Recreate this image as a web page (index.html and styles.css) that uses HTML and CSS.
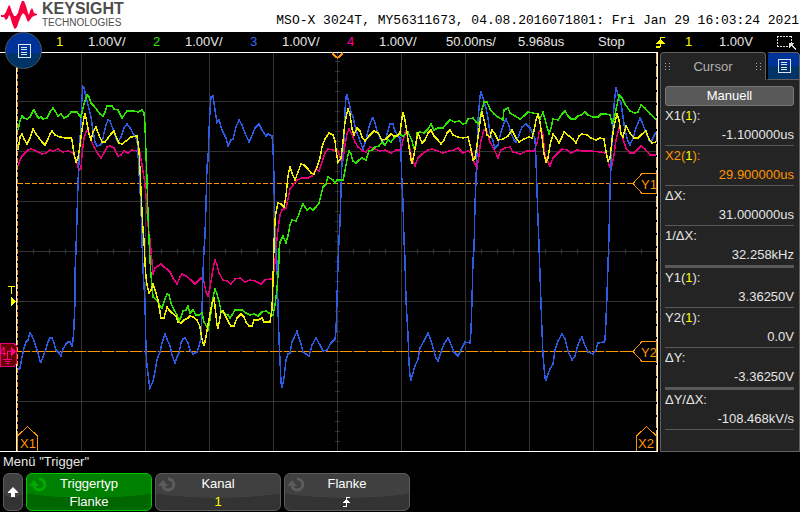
FILE: index.html
```html
<!DOCTYPE html>
<html lang="de">
<head>
<meta charset="utf-8">
<title>MSO-X 3024T</title>
<link rel="stylesheet" href="styles.css">
</head>
<body>
<header class="brandbar">
  <div class="brand">
    <svg class="brand-mark" viewBox="0 0 38 30" width="38" height="30" aria-hidden="true">
      <path fill="#f5003d" d="M1 15 4 15 6 12 8 7 9 5 10 6 12 12 14 16 16 16 18 13 20 6 22 1 24 1 26 6 28 13 29 15 30 11 32 8 33 10 34 13 37 14 37 15 34 16 32 17 30 20 28 22 27 20 25 15 23 13 21 16 19 21 17 27 15 29 14 28 12 23 10 16 9 15 8 18 6 20 5 19 4 17 1 17Z"/>
    </svg>
    <div>
      <div class="brand-name">KEYSIGHT</div>
      <div class="brand-sub">TECHNOLOGIES</div>
    </div>
  </div>
  <div class="device">MSO-X 3024T, MY56311673, 04.08.2016071801: Fri Jan 29 16:03:24 2021</div>
</header>

<div class="status">
  <button class="main-menu" aria-label="Hauptmenü">
    <svg viewBox="0 0 14 14" width="14" height="14" shape-rendering="crispEdges"><path fill="none" stroke="#dfe6f2" d="M1 .5H13V13.5H1ZM4 3.5H10M4 5.5H10M4 8.5H10M4 10.5H10"/></svg>
  </button>
  <span></span>
  <span class="ch1">1</span><span>1.00V/</span>
  <span class="ch2">2</span><span>1.00V/</span>
  <span class="ch3">3</span><span>1.00V/</span>
  <span class="ch4">4</span><span>1.00V/</span>
  <span>50.00ns/</span>
  <span>5.968us</span>
  <span>Stop</span>
  <svg viewBox="0 0 10 12" width="10" height="12" shape-rendering="crispEdges"><path fill="none" stroke="#ff0" d="M1 10.5H5.5V1.500H10M1 11.500H5"/><path fill="#ff0" d="M1 8 5.500 3 10 8Z"/></svg>
  <span class="ch1">1</span>
  <span>1.00V</span>
  <svg viewBox="0 0 20 16" width="20" height="16" shape-rendering="crispEdges"><path fill="none" stroke="#ddd" stroke-dasharray="2 1" d="M0 2.500H14M0 12.500H12M.5 2V13M14.500 2V9"/><path fill="#ddd" d="M12 9H17V10L15 11 19 15 18 16 14 12 12 14Z"/></svg>
</div>

<main class="workspace">
  <svg class="plot" viewBox="0 52 660 400" role="img" aria-label="Messkurven">
    <g class="grid">
      <path d="M81.500 53V451M145.500 53V451M209.500 53V451M273.500 53V451M337.500 53V451M401.500 53V451M465.500 53V451M529.500 53V451M593.500 53V451"/>
      <path d="M17 101.500H657M17 151.500H657M17 201.500H657M17 251.500H657M17 301.500H657M17 351.500H657M17 401.500H657"/>
      <path class="ticks-x" d="M33 251.500H657"/>
      <path class="ticks-y" d="M337.500 61V450"/>
    </g>

    <g class="cursor">
      <path stroke-dasharray="5 2" d="M18 183.500H633"/>
      <path stroke-dasharray="12 2" d="M18 351.500H633"/>
    </g>

    <g class="trace">
      <polyline class="t4" points="18,166 20,160 22,156 25,153 28,150 31,149 34,150 38,152 42,154 46,153 50,150 53,151 58,149 63,152 68,151 73,153 76,160 79,170 81,168 82,155 84,138 86,132 88,130 91,140 94,147 98,154 101,158 104,153 107,147 110,146 114,148 118,156 121,155 124,151 128,153 132,150 137,151 140,153 142,165 144,177 146,195 148,225 150,240 152,262 153,275 155,268 158,266 161,264 164,267 167,269 170,272 173,278 177,284 180,277 182,274 186,276 191,280 195,284 198,281 201,278 204,282 206,292 208,296 210,288 212,275 214,264 215,260 217,265 219,273 223,280 227,281 231,284 235,279 240,278 245,282 250,280 255,281 261,284 265,280 270,279 273,279 275,262 276,248 278,230 280,215 282,210 286,208 288,199 290,189 293,185 297,180 302,178 308,178 312,176 316,169 319,171 322,162 325,153 328,149 333,150 338,151 341,160 343,160 345,145 347,134 349,129 352,134 355,142 358,147 363,151 366,152 370,147 375,149 380,151 385,150 391,153 396,150 401,150 403,140 406,130 409,145 412,158 415,166 418,158 422,154 428,150 432,149 438,151 443,153 449,151 454,150 458,148 463,153 468,151 472,153 474,162 477,168 479,155 481,140 484,130 487,132 490,142 494,149 498,158 501,150 505,148 510,147 513,152 520,154 527,151 534,151 537,143 539,133 541,128 543,135 545,155 548,162 550,166 553,158 557,154 562,149 567,150 571,153 577,150 583,151 590,151 600,152 606,153 609,165 611,170 614,155 616,140 619,128 622,136 626,148 630,153 634,153 638,149 641,146 645,149 650,155 656,155"/>
      <polyline class="t3" points="18,370 20,368 22,357 24,348 26,342 28,340 30,333 32,336 34,341 36,347 38,353 40,361 41,362 43,357 46,349 48,342 50,338 52,338 54,343 56,350 59,353 61,356 63,349 66,344 68,342 70,342 72,346 73,341 74,326 75,301 75,273 76,250 77,217 78,183 79,160 81,120 82,97 83,87 84,88 86,97 88,105 91,117 93,131 95,142 97,146 100,145 102,143 104,133 106,125 108,120 110,121 113,129 116,138 118,142 121,137 124,128 127,124 130,128 134,135 137,140 138,153 140,190 141,207 142,240 143,270 145,302 146,351 147,366 149,382 150,388 153,381 155,372 157,360 160,352 162,343 164,337 165,334 167,339 170,346 172,355 175,363 177,357 179,353 181,343 183,339 185,338 188,343 190,350 193,354 197,352 199,346 201,338 202,310 203,273 204,250 205,235 206,205 207,165 208,161 209,132 210,110 211,97 213,96 215,110 217,122 219,120 222,130 226,138 228,146 231,140 233,139 236,127 239,120 242,125 245,133 249,142 251,138 255,128 259,124 262,130 266,136 268,134 272,136 273,147 274,178 275,240 277,262 278,310 279,339 280,361 281,382 282,388 284,378 286,360 288,354 290,353 292,342 294,338 297,331 299,338 301,344 303,352 306,354 309,356 312,345 316,338 320,345 323,351 327,350 331,343 335,339 336,331 337,300 338,262 339,240 340,223 341,190 342,160 344,140 345,110 346,97 347,95 349,103 351,112 353,117 356,130 360,141 363,149 366,140 369,127 372,119 373,118 375,123 377,131 380,138 383,142 386,138 388,131 390,124 393,124 395,131 398,136 400,138 401,154 402,185 403,202 404,240 405,260 406,300 408,335 409,363 410,376 411,380 413,373 415,366 418,359 420,348 424,341 428,333 430,338 432,344 434,351 436,358 438,361 441,352 444,344 448,338 450,342 454,352 458,356 461,350 465,342 470,343 471,331 472,300 473,260 474,250 475,205 476,180 477,150 478,120 480,96 481,92 483,98 486,108 488,118 490,133 493,141 495,148 498,145 499,140 501,132 504,123 506,119 509,126 511,133 514,140 516,142 519,135 522,127 526,124 530,128 533,134 535,139 536,160 537,190 538,220 539,245 540,275 541,303 542,331 543,355 545,378 546,380 548,374 550,369 553,364 555,350 558,341 562,334 565,339 568,351 572,360 575,356 577,348 580,340 582,337 584,343 588,352 593,354 596,350 598,343 604,342 605,340 606,320 607,295 608,265 609,235 610,190 611,165 612,140 614,105 616,87 618,95 621,103 623,117 625,131 628,141 630,145 633,138 636,128 640,118 642,122 645,130 649,140 651,142 654,136 656,132"/>
      <polyline class="t2" points="18,130 20,121 22,116 24,118 27,119 30,117 33,111 34,110 37,116 39,118 41,117 43,119 47,118 50,112 53,108 55,111 58,116 61,114 64,118 68,116 71,112 75,112 77,112 79,115 81,117 83,108 85,101 87,95 89,97 91,103 94,106 97,110 100,114 103,116 105,112 107,106 112,106 114,109 118,110 122,118 127,111 134,111 138,112 142,110 144,113 145,125 146,155 147,180 148,215 149,240 150,260 151,275 153,297 157,300 160,306 162,308 165,299 167,294 169,295 171,303 174,310 177,315 179,321 181,317 183,311 186,310 188,306 190,313 193,310 196,315 199,315 202,313 204,322 207,327 208,330 210,320 212,305 214,293 215,289 217,294 219,301 221,311 225,314 228,315 230,318 232,315 235,310 242,310 246,313 250,315 254,314 258,316 262,312 266,311 269,313 273,315 275,305 277,289 278,275 279,260 279,250 280,242 282,238 283,236 286,243 288,236 290,225 292,220 296,221 299,214 302,206 303,204 307,210 310,208 313,210 316,207 319,203 321,195 323,187 326,184 328,177 333,180 335,183 337,180 343,180 344,176 346,165 348,155 349,151 351,154 353,161 356,163 359,160 362,158 366,160 369,151 372,150 375,147 379,146 382,142 385,145 388,140 391,142 394,138 399,134 403,136 408,132 412,141 414,148 416,145 417,133 420,132 424,133 428,129 431,124 434,130 438,128 443,128 446,124 450,120 455,122 459,121 463,124 466,123 468,119 473,118 476,122 479,124 481,113 484,102 487,102 490,109 494,114 498,117 503,120 504,110 508,108 510,113 515,116 520,119 524,116 528,112 533,113 538,114 540,119 543,112 546,123 549,134 551,128 553,119 558,120 562,114 565,111 568,116 571,119 575,119 578,116 581,115 585,112 588,115 593,117 598,117 601,114 606,114 610,115 612,123 614,119 617,105 619,95 622,98 625,104 630,111 635,113 638,112 641,105 645,108 650,114 656,119"/>
      <polyline class="t1" points="18,150 20,137 22,134 24,139 27,144 30,138 32,132 33,129 36,134 39,138 42,142 45,145 48,139 50,134 52,131 55,135 60,137 66,138 71,138 72,140 74,154 76,162 78,158 80,145 82,130 84,117 85,113 87,123 89,134 91,140 93,132 96,127 99,135 102,142 105,142 108,138 111,134 114,131 117,139 119,143 122,144 126,141 131,137 137,136 139,150 141,190 142,212 143,230 144,240 145,263 146,277 147,285 149,293 151,290 153,284 155,290 158,300 160,312 161,318 164,318 167,307 169,310 172,313 176,316 178,322 181,323 184,320 188,318 190,316 193,317 197,320 200,327 202,339 204,346 206,337 208,325 210,314 212,303 214,299 215,306 217,325 218,328 220,318 221,312 223,311 226,317 229,323 231,326 234,326 237,318 241,314 244,317 246,322 249,326 252,326 254,320 258,320 262,318 264,322 270,322 271,315 272,310 273,280 274,245 275,220 276,212 278,203 281,204 284,207 286,196 288,176 290,166 292,173 295,180 298,172 301,164 304,165 308,169 311,173 314,174 317,167 320,158 322,147 325,139 329,133 333,135 335,141 336,150 338,162 341,158 343,142 345,122 348,109 350,114 352,129 354,135 357,128 360,131 362,137 365,141 369,136 374,131 378,133 382,140 386,139 391,134 394,136 397,136 400,133 402,118 403,112 405,120 407,132 409,147 411,160 412,163 414,155 416,142 418,133 422,143 425,140 428,133 431,130 434,136 438,140 441,144 444,140 447,133 450,130 453,135 458,137 463,138 468,137 471,149 473,160 475,158 477,145 479,130 481,115 482,112 485,124 487,135 490,137 492,130 495,134 498,140 503,139 508,136 512,130 516,138 519,142 524,139 529,137 532,138 534,131 536,120 538,114 540,122 542,137 544,154 546,162 548,158 550,145 553,134 556,138 559,143 562,137 564,132 569,136 573,139 576,143 579,136 582,134 587,135 591,138 596,140 600,138 604,139 606,152 608,161 610,158 612,140 614,126 617,114 619,120 621,134 623,137 626,126 630,133 634,138 638,138 642,134 646,131 649,139 652,143 656,142"/>
    </g>

    <path class="frame" d="M0 52.500H658M0 451.500H658M16.500 52V452M657.500 52V452"/>
    <g class="cursor">
      <path stroke-dasharray="5 2" d="M17.500 53V451"/>
      <path class="x2-line" stroke-dasharray="11 2" d="M656.500 53V451"/>
      <path class="flag" d="M656 173.500H642L633 183.500 642 193.500H656Z"/>
      <path class="flag" d="M656 341.500H642L633 351.500 642 361.500H656Z"/>
      <path class="flag" d="M17.500 451V436L27.500 426.500 37.500 436V451"/>
      <path class="flag" d="M636.500 451V436L646.500 426.500 656.500 436V451"/>
      <path class="trig" d="M332 53 337.500 58 343 53"/>
    </g>
    <g class="flag-text">
      <text x="641" y="189">Y1</text>
      <text x="641" y="357">Y2</text>
      <text x="20" y="448">X1</text>
      <text x="638" y="448">X2</text>
    </g>

    <path class="t-letter" d="M8 286.500H15M11.500 286V294"/>
    <path class="t-arrow" d="M11 297 16 301.500 11 306Z"/>
    <path class="gnd-box" d="M0 343.500H14L16 345.500V364L14 366.500H0Z"/>
    <text class="gnd-text" x="-1" y="356">4</text>
    <path class="gnd-arrow" d="M11 346 16 351.500 11 356Z"/>
    <path class="gnd-lines" d="M11 351.500H7.500V359M3 359.500H12M5 361.500H10M6 363.500H9"/>
  </svg>

  <aside class="panel">
    <div class="tabs">
      <div class="tab">
        <svg viewBox="0 0 5 8" width="5" height="8" shape-rendering="crispEdges"><path stroke="#aaa" stroke-dasharray="1 2" d="M.5 0V8M4.500 0V8"/></svg>
        <span>Cursor</span>
        <svg viewBox="0 0 5 8" width="5" height="8" shape-rendering="crispEdges"><path stroke="#aaa" stroke-dasharray="1 2" d="M.5 0V8M4.500 0V8"/></svg>
      </div>
      <button class="tab-menu" aria-label="Menü">
        <svg viewBox="0 0 14 14" width="14" height="14" shape-rendering="crispEdges"><path fill="none" stroke="#dfe6f2" d="M1 .5H13V13.500H1ZM4 3.500H10M4 5.500H10M4 8.500H10M4 10.500H10"/></svg>
      </button>
    </div>
    <div class="panel-body">
      <button class="mode">Manuell</button>
      <dl class="readings">
        <div><dt>X1(<b>1</b>):</dt><dd>-1.100000us</dd></div>
        <div class="active"><dt>X2(<b>1</b>):</dt><dd>29.900000us</dd></div>
        <div><dt>ΔX:</dt><dd>31.000000us</dd></div>
        <div class="group-end"><dt>1/ΔX:</dt><dd>32.258kHz</dd></div>
        <div><dt>Y1(<b>1</b>):</dt><dd>3.36250V</dd></div>
        <div><dt>Y2(<b>1</b>):</dt><dd>0.0V</dd></div>
        <div class="group-end"><dt>ΔY:</dt><dd>-3.36250V</dd></div>
        <div><dt>ΔY/ΔX:</dt><dd>-108.468kV/s</dd></div>
      </dl>
    </div>
  </aside>
</main>

<footer class="menu">
  <div class="menu-title">Menü "Trigger"</div>
  <div class="keys">
    <button class="key back" aria-label="Zurück">
      <svg viewBox="0 0 10 10" width="10" height="10"><path fill="#fff" d="M5 0 10 5V6H7V10H3V6H0V5Z"/></svg>
    </button>
    <button class="key selected">
      <svg class="knob" viewBox="0 0 18 16" width="18" height="16"><path fill="none" stroke="currentColor" stroke-width="3" d="M5 10A5.500 5.500 0 1 0 10 3"/><path fill="currentColor" d="M0 10 5 4 10 10Z"/></svg>
      <span>Triggertyp</span><span>Flanke</span>
    </button>
    <button class="key">
      <svg class="knob" viewBox="0 0 18 16" width="18" height="16"><path fill="none" stroke="currentColor" stroke-width="3" d="M5 10A5.500 5.500 0 1 0 10 3"/><path fill="currentColor" d="M0 10 5 4 10 10Z"/></svg>
      <span>Kanal</span><span class="ch1">1</span>
    </button>
    <button class="key">
      <svg class="knob" viewBox="0 0 18 16" width="18" height="16"><path fill="none" stroke="currentColor" stroke-width="3" d="M5 10A5.500 5.500 0 1 0 10 3"/><path fill="currentColor" d="M0 10 5 4 10 10Z"/></svg>
      <span>Flanke</span>
      <span class="edge"><svg viewBox="0 0 8 12" width="8" height="12" shape-rendering="crispEdges"><path fill="none" stroke="#fff" d="M0 10.500H3.500V1.500H7"/><path fill="#fff" d="M0 7 3.500 3 7 7Z"/></svg></span>
    </button>
  </div>
</footer>
</body>
</html>
```
FILE: styles.css
```css
* {
  box-sizing: border-box;
}

body {
  margin: 0;
  background: #000;
  color: #e6e6e6;
  font: 13px/20px "Liberation Sans", Arial, sans-serif;
}

button {
  margin: 0;
  padding: 0;
  font: inherit;
  color: inherit;
}

svg {
  display: block;
}

.ch1 { color: #ff0; }
.ch2 { color: #2ee600; }
.ch3 { color: #3b66f0; }
.ch4 { color: #ff0090; }

/* Brand bar */
.brandbar {
  display: flex;
  justify-content: space-between;
  height: 32px;
  padding-right: 1px;
  background: #fff;
}

.brand {
  display: flex;
  gap: 4px;
}

.brand-name {
  padding-top: 1px;
  color: #4d4d4d;
  font-size: 16px;
  line-height: 16px;
  font-weight: bold;
}

.brand-sub {
  color: #4d4d4d;
  font-size: 10px;
  line-height: 11px;
}

.device {
  padding-top: 11px;
  color: #000;
  font-family: "Liberation Mono", monospace;
  white-space: nowrap;
}

/* Status line */
.status {
  position: relative;
  display: grid;
  grid-template-columns:
    minmax(0, 56fr)
    minmax(0, 32fr) minmax(0, 65fr)
    minmax(0, 32fr) minmax(0, 65fr)
    minmax(0, 32fr) minmax(0, 65fr)
    minmax(0, 32fr) minmax(0, 67fr)
    minmax(0, 72fr) minmax(0, 80fr) minmax(0, 57fr)
    minmax(0, 30fr) minmax(0, 34fr) minmax(0, 58fr) minmax(0, 23fr);
  align-items: center;
  height: 20px;
  white-space: nowrap;
}

.main-menu {
  position: absolute;
  top: 0;
  left: 5px;
  display: grid;
  place-items: center;
  width: 37px;
  height: 37px;
  border: 1px solid #4a5560;
  border-radius: 50%;
  background: linear-gradient(#039 58%, #036 58%);
}

/* Plot */
.workspace {
  display: grid;
  grid-template-columns: minmax(0, 1fr) 140px;
  align-items: start;
}

.plot {
  width: 100%;
  height: auto;
  font-size: 13px;
}

.plot path,
.plot polyline {
  shape-rendering: crispEdges;
}

.grid path {
  fill: none;
  stroke: #333;
}

.grid .ticks-x {
  stroke-width: 5;
  stroke-dasharray: 1 15;
}

.grid .ticks-y {
  stroke-width: 5;
  stroke-dasharray: 1 9;
}

.cursor path {
  fill: none;
  stroke: #ff9500;
}

.cursor .x2-line {
  stroke: #ffc04d;
}

.cursor .flag {
  fill: #000;
}

.cursor .trig {
  stroke-width: 2;
}

.trace polyline {
  fill: none;
  stroke-width: 1.5;
}

.t1 { stroke: #f0f000; }
.t2 { stroke: #2ee600; }
.t3 { stroke: #2d5be3; }
.t4 { stroke: #e6007e; }

.frame {
  fill: none;
  stroke: #fff;
}

.flag-text {
  fill: #ff9500;
}

.t-letter {
  stroke: #ff0;
}

.t-arrow {
  fill: #ff0;
}

.gnd-box {
  fill: #600;
  stroke: #e6007e;
}

.gnd-text,
.gnd-arrow {
  fill: #ff0090;
}

.gnd-lines {
  fill: none;
  stroke: #ff0090;
}

/* Cursor panel */
.panel {
  display: flex;
  flex-direction: column;
  align-self: stretch;
}

.tabs {
  display: flex;
}

.tab {
  display: flex;
  flex: 1;
  align-items: center;
  justify-content: space-between;
  height: 28px;
  padding: 0 4px;
  border: 1px solid #606060;
  border-width: 1px 1px 0;
  border-radius: 4px 4px 0 0;
  background: #242424;
  color: #b3b3b3;
}

.tab-menu {
  display: grid;
  place-items: center;
  width: 34px;
  height: 28px;
  border: 1px solid #606060;
  border-left: 2px solid #000;
  border-radius: 4px 4px 0 0;
  background: linear-gradient(#039 50%, #036 50%);
}

.panel-body {
  flex: 1;
  padding: 6px 5px 0 4px;
  border: 1px solid #606060;
  border-width: 0 1px 1px;
  background: #242424;
}

.mode {
  display: block;
  width: 100%;
  height: 20px;
  border: 1px solid #777;
  border-radius: 3px;
  background: #595959;
  color: #fff;
  line-height: 18px;
}

.readings {
  margin: 0;
}

.readings div {
  border-bottom: 1px solid #595959;
}

.readings .group-end {
  border-bottom-width: 3px;
}

.readings dt {
  line-height: 19px;
}

.readings dd {
  margin: 0;
  text-align: right;
}

.readings b {
  color: #ff0;
  font-weight: normal;
}

.readings .active {
  color: #ff9500;
}

/* Softkeys */
.menu {
  padding: 0 3px;
}

.keys {
  display: grid;
  grid-template-columns: 20px repeat(3, minmax(0, 126px));
  gap: 3px;
  padding-top: 1px;
}

.key {
  position: relative;
  display: flex;
  flex-direction: column;
  align-items: center;
  height: 38px;
  padding-top: 1px;
  border: 1px solid #5c5c5c;
  border-radius: 6px;
  background: radial-gradient(ellipse 90% 24px at 50% 0, #404040 98%, #333 100%);
  color: #fff;
  line-height: 18px;
}

.key.back {
  justify-content: center;
  padding: 0;
}

.key.selected {
  border-color: #0c0;
  background: radial-gradient(ellipse 90% 24px at 50% 0, #008000 98%, #060 100%);
}

.key .ch1 {
  color: #ff0;
}

.knob {
  position: absolute;
  top: 2px;
  left: 2px;
  color: #5c5c5c;
}

.selected .knob {
  color: #0a0;
}

.edge {
  display: flex;
  align-items: center;
  height: 18px;
}
```
